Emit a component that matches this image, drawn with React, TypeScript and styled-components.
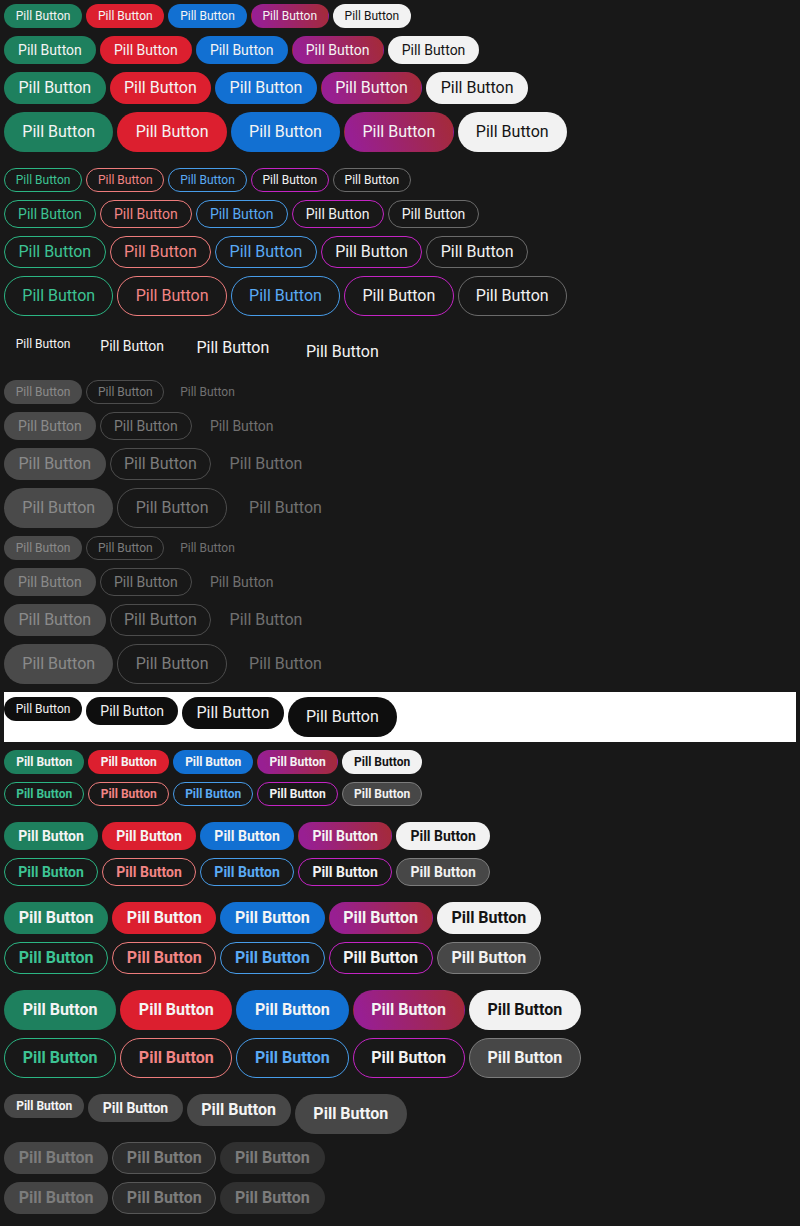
import React from 'react';
import styled, { createGlobalStyle, css } from 'styled-components';

const GlobalStyle = createGlobalStyle`
  html, body {
    margin: 0;
    padding: 0;
    background: #181818;
  }
  body {
    padding: 4px;
    font-family: Roboto, "Liberation Sans", sans-serif;
  }
`;

type Size = 'xs' | 'sm' | 'md' | 'lg';
type Tone =
  | 'green' | 'red' | 'blue' | 'purple' | 'light'
  | 'oGreen' | 'oRed' | 'oBlue' | 'oPurple' | 'oGray' | 'oGrayFill'
  | 'ghost' | 'dOff' | 'dOutline' | 'dText' | 'dark' | 'neutral'
  | 'bOffFill' | 'bOffOutline' | 'bOffSoft';

// pad = padding horizontal normal, boldPad = en gras
const sizes = {
  xs: { h: 24, font: 12, pad: 10.8, boldPad: 11.2 },
  sm: { h: 28, font: 14, pad: 13.1, boldPad: 13.3 },
  md: { h: 32, font: 16, pad: 13.4, boldPad: 13.7 },
  lg: { h: 40, font: 16, pad: 17.3, boldPad: 17.7 },
};

// couleurs par variante
const tones: Record<Tone, ReturnType<typeof css>> = {
  green: css`background: #1e805e; color: #f4f4f4;`,
  red: css`background: #dc1f2f; color: #f4f4f4;`,
  blue: css`background: #1270d2; color: #f4f4f4;`,
  purple: css`background: linear-gradient(70deg, #981f92 10%, #a42a3c 95%); color: #f4f4f4;`,
  light: css`background: #f2f2f2; color: #141414;`,
  oGreen: css`border-color: #2bb583; color: #3dc394;`,
  oRed: css`border-color: #ee7c7c; color: #f28585;`,
  oBlue: css`border-color: #479ce9; color: #5aaaf4;`,
  oPurple: css`border-color: #c424c4; color: #f2f2f2;`,
  oGray: css`border-color: #6a6a6a; color: #f2f2f2;`,
  oGrayFill: css`background: #474747; border-color: #7c7c7c; color: #f2f2f2;`,
  ghost: css`color: #f4f4f4;`,
  dOff: css`background: #4a4a4a; color: #8a8a8a;`,
  dOutline: css`border-color: #4c4c4c; color: #7c7c7c;`,
  dText: css`color: #707070;`,
  dark: css`background: #0e0e0e; color: #f2f2f2;`,
  neutral: css`background: #474747; color: #f4f4f4;`,
  bOffFill: css`background: #454545; color: #7c7c7c;`,
  bOffOutline: css`background: #2c2c2c; border-color: #575757; color: #7c7c7c;`,
  bOffSoft: css`background: #303030; color: #7c7c7c;`,
};

const Pill = styled.button<{ $size: Size; $tone: Tone; $bold?: boolean }>`
  display: inline-flex;
  align-items: center;
  justify-content: center;
  box-sizing: border-box;
  flex-shrink: 0;
  height: ${p => sizes[p.$size].h}px;
  padding: 0 ${p => (p.$bold ? sizes[p.$size].boldPad : sizes[p.$size].pad)}px;
  border: 1px solid transparent;
  border-radius: 999px;
  background: transparent;
  font-family: Roboto, "Liberation Sans", sans-serif;
  font-size: ${p => sizes[p.$size].font}px;
  font-weight: ${p => (p.$bold ? 700 : 400)};
  line-height: 1;
  white-space: nowrap;
  cursor: pointer;
  ${p => tones[p.$tone]}
`;

const Page = styled.div`
  display: flex;
  flex-direction: column;
  gap: 8px;
`;

const Group = styled.div<{ $spaced?: boolean }>`
  display: flex;
  flex-direction: column;
  gap: 8px;
  margin-top: ${p => (p.$spaced ? 8 : 0)}px;
`;

const Row = styled.div<{ $spaced?: boolean }>`
  display: flex;
  align-items: flex-start;
  gap: 4px;
  margin-top: ${p => (p.$spaced ? 8 : 0)}px;
`;

const Band = styled.div`
  display: flex;
  align-items: flex-start;
  gap: 4px;
  padding: 5px 0;
  background: #ffffff;
`;

const SIZES: Size[] = ['xs', 'sm', 'md', 'lg'];
const FILLED: Tone[] = ['green', 'red', 'blue', 'purple', 'light'];
const OUTLINED: Tone[] = ['oGreen', 'oRed', 'oBlue', 'oPurple', 'oGray'];
const BOLD_OUTLINED: Tone[] = ['oGreen', 'oRed', 'oBlue', 'oPurple', 'oGrayFill'];
const DISABLED: Tone[] = ['dOff', 'dOutline', 'dText'];
const BOLD_DISABLED: Tone[] = ['bOffFill', 'bOffOutline', 'bOffSoft'];

const LABEL = 'Pill Button';

function ToneRow({ tones: list, size, bold }: { tones: Tone[]; size: Size; bold?: boolean }) {
  return (
    <Row>
      {list.map((t, i) => (
        <Pill key={i} $size={size} $tone={t} $bold={bold}>{LABEL}</Pill>
      ))}
    </Row>
  );
}

function DisabledSet() {
  return (
    <Group>
      {SIZES.map(s => <ToneRow key={s} tones={DISABLED} size={s} />)}
    </Group>
  );
}

export default function App() {
  return (
    <>
      <GlobalStyle />
      <Page>
        <Group>
          {SIZES.map(s => <ToneRow key={s} tones={FILLED} size={s} />)}
        </Group>
        <Group $spaced>
          {SIZES.map(s => <ToneRow key={s} tones={OUTLINED} size={s} />)}
        </Group>
        <Row $spaced>
          {SIZES.map(s => <Pill key={s} $size={s} $tone="ghost">{LABEL}</Pill>)}
        </Row>
        <DisabledSet />
        <DisabledSet />
        <Band>
          {SIZES.map(s => <Pill key={s} $size={s} $tone="dark">{LABEL}</Pill>)}
        </Band>
        {SIZES.map((s, i) => (
          <Group key={s} $spaced={i > 0}>
            <ToneRow tones={FILLED} size={s} bold />
            <ToneRow tones={BOLD_OUTLINED} size={s} bold />
          </Group>
        ))}
        <Row $spaced>
          {SIZES.map(s => <Pill key={s} $size={s} $tone="neutral" $bold>{LABEL}</Pill>)}
        </Row>
        <Group>
          <ToneRow tones={BOLD_DISABLED} size="md" bold />
          <ToneRow tones={BOLD_DISABLED} size="md" bold />
        </Group>
      </Page>
    </>
  );
}
